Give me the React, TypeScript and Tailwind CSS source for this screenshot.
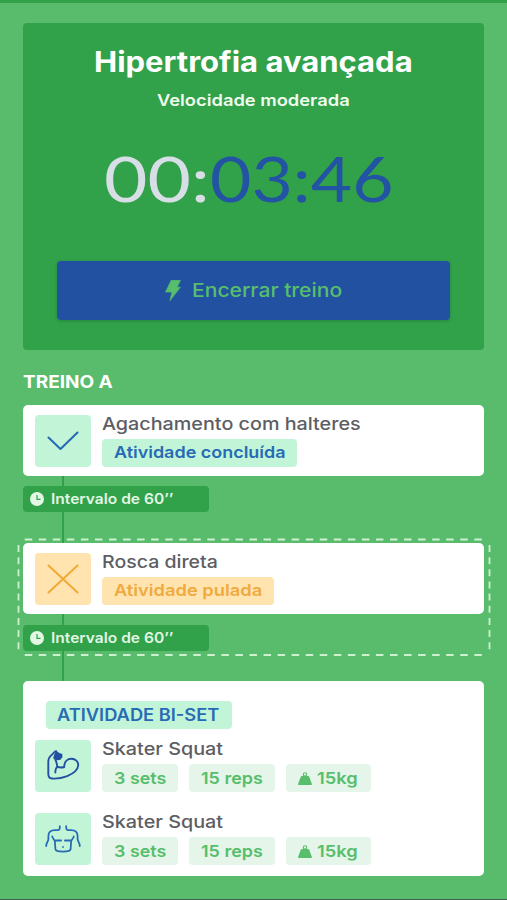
import { useLayoutEffect, useRef, type ReactNode } from "react";

/* Single line of text stretched horizontally to a given width. */
function Fit({ width, className = "", children }: { width: number; className?: string; children: ReactNode }) {
  const ref = useRef<HTMLSpanElement>(null);
  useLayoutEffect(() => {
    const el = ref.current;
    if (!el) return;
    el.style.transform = `scaleX(${width / el.offsetWidth})`;
  }, [width]);
  return (
    <span className={`block shrink-0 text-left whitespace-nowrap ${className}`} style={{ width }}>
      <span ref={ref} className="inline-block origin-left">
        {children}
      </span>
    </span>
  );
}

function Bolt() {
  return (
    <svg viewBox="0 0 16 21" className="h-[21px] w-4 shrink-0" fill="#57be6c">
      <path d="M6.2.3h9.2L12 7.2h3.4L5 20.6 7 12H.6z" stroke="#57be6c" strokeWidth=".7" strokeLinejoin="round" />
    </svg>
  );
}

function Clock() {
  return (
    <svg viewBox="0 0 14 14" className="size-[14px] shrink-0">
      <circle cx="7" cy="7" r="7" fill="#e2f7e4" />
      <path d="M7 3v4.300h3.500" fill="none" stroke="#31a14a" strokeWidth="1.200" />
    </svg>
  );
}

function Weight() {
  return (
    <svg viewBox="0 0 14 13" className="h-[13px] w-[14px] shrink-0">
      <circle cx="7" cy="2.400" r="1.700" fill="none" stroke="#57be6c" strokeWidth="1.100" />
      <path d="M4 4h6q.9 0 1.200.7L13.900 12q.2.900-.6.900H.7q-.8 0-.6-.900L2.800 4.700Q3.100 4 4 4z" fill="#57be6c" />
    </svg>
  );
}

function Check() {
  return (
    <svg viewBox="0 0 56 52" className="size-full" fill="none" stroke="#286bb5" strokeWidth="2.100" strokeLinecap="round" strokeLinejoin="round">
      <path d="M13.500 22.500 25.500 34 42.500 17.500" />
    </svg>
  );
}

function Cross() {
  return (
    <svg viewBox="0 0 56 52" className="size-full" fill="none" stroke="#f0aa35" strokeWidth="2" strokeLinecap="round">
      <path d="M13.500 12.500 42.500 39.500M42.500 12.500 13.500 39.500" />
    </svg>
  );
}

function Arm() {
  return (
    <svg viewBox="0 0 56 52" className="size-full" fill="none" stroke="#2351a2" strokeWidth="1.900" strokeLinecap="round" strokeLinejoin="round">
      <path d="M21.300 11.300c-.8 0-1.500.4-2.100 1l-4.200 4.400c-1.200 1.300-1.700 2.500-1.700 4.300v13c0 3 1.200 4.300 3.700 4.500 4.700.4 10-.4 15.200-2.400 5.600-2.300 10.600-6 11-10.600.3-4-2.900-6.700-6.700-6.700-4.100 0-6.900 2.800-7.200 6.900" />
      <path d="M20.500 20c1.400 2.300 1.300 4.500 1.800 6.700 2.300 1.100 4.600 1 7 .3M22.300 26.700c-1.600 1.500-2.200 3.400-1.900 5.800" />
      <path d="m21.500 12.200 2.500 1.600 2.400.8.100 2.300-1.900 2.200-3.400.3-2-1.400.700-2.500z" fill="#2351a2" />
    </svg>
  );
}

function Torso() {
  return (
    <svg viewBox="0 0 56 52" className="size-full" fill="none" stroke="#286bb5" strokeWidth="1.800" strokeLinecap="round" strokeLinejoin="round">
      <path d="M24.800 13.200c.1 2.300-.2 3.900-2.200 3.900H20c-4.300 0-6.600 2-6.600 5.900v3c0 2.600-2.200 3.400-2.200 7" />
      <path d="M31.200 13.200c-.1 2.300.2 3.900 2.200 3.900H36c4.300 0 6.600 2 6.600 5.900v3c0 2.600 2.200 3.400 2.200 7" />
      <path d="M17.300 23.500c.3 2.300 2.500 2.800 2.600 5.200l.5 7.500c.2 1.900 3.600 2.400 7.600 2.400s7.400-.5 7.600-2.400l.5-7.500c.1-2.400 2.300-2.900 2.600-5.200" />
      <path d="M20.500 27.500h5.600M29.900 27.500h5.600M28 34v.1" />
    </svg>
  );
}

function Tile({ tone, children }: { tone: "mint" | "amber"; children: ReactNode }) {
  return (
    <div className={`h-[52px] w-14 shrink-0 rounded-[4px] ${tone === "mint" ? "bg-[#c2f5d8]" : "bg-[#ffe4af]"}`}>{children}</div>
  );
}

function Interval() {
  return (
    <div className="flex h-[26px] w-[186px] items-center gap-[7px] rounded-[4px] bg-[#31a14a] pl-[7px] text-[#e2f7e4]">
      <Clock />
      <Fit width={122.500} className="text-[14.600px] leading-[26px] font-semibold">
        Intervalo de 60’’
      </Fit>
    </div>
  );
}

function Activity({ title, titleWidth, badge, badgeWidth, skipped = false }: { title: string; titleWidth: number; badge: string; badgeWidth: number; skipped?: boolean }) {
  return (
    <div className="flex h-[71.500px] rounded-[5px] bg-white pt-[10.500px] pl-3">
      <Tile tone={skipped ? "amber" : "mint"}>{skipped ? <Cross /> : <Check />}</Tile>
      <div className="ml-[11px] flex flex-col items-start">
        <Fit width={titleWidth} className="h-6 text-[17.500px] leading-[18px] font-medium text-[#5d5e63]">
          {title}
        </Fit>
        <div className={`h-7 rounded-[4px] px-[11.500px] text-[16.500px] leading-[27px] font-semibold ${skipped ? "bg-[#ffe4af] text-[#f0aa40]" : "bg-[#c2f5d8] text-[#286bb5]"}`}>
          <Fit width={badgeWidth}>{badge}</Fit>
        </div>
      </div>
    </div>
  );
}

function Chip({ width, children }: { width: number; children: ReactNode }) {
  return (
    <div className="flex h-7 items-center gap-[5.500px] rounded-[4px] bg-[#e5f5e9] pr-[12.500px] pl-[11.500px] text-[16.500px] leading-[26px] font-semibold text-[#57be6c]">
      {children === "15kg" && <Weight />}
      <Fit width={width}>{children}</Fit>
    </div>
  );
}

function SetRow({ children }: { children: ReactNode }) {
  return (
    <div className="flex h-[52.500px]">
      <Tile tone="mint">{children}</Tile>
      <div className="ml-[11px]">
        <Fit width={121} className="h-[24.500px] text-[17.500px] leading-[18px] font-medium text-[#5d5e63]">
          Skater Squat
        </Fit>
        <div className="flex gap-[11px]">
          <Chip width={52}>3 sets</Chip>
          <Chip width={62}>15 reps</Chip>
          <Chip width={41}>15kg</Chip>
        </div>
      </div>
    </div>
  );
}

export default function App() {
  return (
    <main className="h-[900px] w-[507px] overflow-hidden border-t-[3px] border-b border-t-[#31a14a] border-b-[#47604f] bg-[#58bc6c] px-[23px] font-['Inter','Open_Sans',sans-serif]">
      <section className="mt-5 flex h-[327px] flex-col items-center rounded-[4px] bg-[#31a14a] pt-[23px]">
        <Fit width={319} className="h-8 text-[28px] leading-8 font-bold text-white">
          Hipertrofia avançada
        </Fit>
        <Fit width={193} className="mt-3 h-5 text-[16.500px] leading-5 font-semibold text-[#effbec]">
          Velocidade moderada
        </Fit>
        <div className="mt-[33px] mr-[9px] flex h-[70px] font-['Lato'] text-[62.500px] leading-[70px]">
          <Fit width={105.500} className="text-[#d8dee6]">00:</Fit>
          <Fit width={184} className="text-[#2353a3]">03:46</Fit>
        </div>
        <button className="mt-12 flex h-[59px] w-[393px] items-center rounded-[4px] bg-[#2351a2] pl-[108px] text-[18.700px] leading-[59px] font-medium text-[#57be6c] shadow-[0_1px_3px_rgba(0,80,30,0.3)]">
          <Bolt />
          <Fit width={150} className="ml-[10.500px]">Encerrar treino</Fit>
        </button>
      </section>

      <h2 className="mt-[21px] h-[33.500px] text-[17.400px] leading-[22px] font-bold text-white">
        <Fit width={89.500}>TREINO A</Fit>
      </h2>

      <div className="relative">
        <div className="absolute top-[60px] left-[38.500px] h-[230px] w-[2.500px] bg-[#31a14a]" />
        <div className="relative">
          <Activity title="Agachamento com halteres" titleWidth={258.500} badge="Atividade concluída" badgeWidth={172} />
          <div className="mt-[9.900px]">
            <Interval />
          </div>
        </div>
        <div className="relative mt-[31.100px]">
          <svg className="absolute -top-[5px] -left-[6px] h-[119px] w-[474px]" fill="none" stroke="#cdf0cf" strokeWidth="1.800">
            <path d="M7.700 1.500H467" strokeDasharray="7.500 6.550" />
            <path d="M7.700 117H467" strokeDasharray="7.500 6.550" />
            <path d="M1.500 7V115" strokeDasharray="7 5.150" />
            <path d="M472.500 7V115" strokeDasharray="7 5.150" />
          </svg>
          <Activity title="Rosca direta" titleWidth={116} badge="Atividade pulada" badgeWidth={148.500} skipped />
          <div className="mt-[10.500px]">
            <Interval />
          </div>
        </div>
        <div className="relative mt-[30px] h-[195px] rounded-[5px] bg-white pt-5 pl-3">
          <div className="ml-[11px] h-7 w-[185.500px] rounded-[4px] bg-[#c2f5d8] pl-[11px] text-[16.700px] leading-[28px] font-semibold text-[#286bb5]">
            <Fit width={162}>ATIVIDADE BI-SET</Fit>
          </div>
          <div className="mt-[11px] flex flex-col gap-[20.500px]">
            <SetRow>
              <Arm />
            </SetRow>
            <SetRow>
              <Torso />
            </SetRow>
          </div>
        </div>
      </div>
    </main>
  );
}
